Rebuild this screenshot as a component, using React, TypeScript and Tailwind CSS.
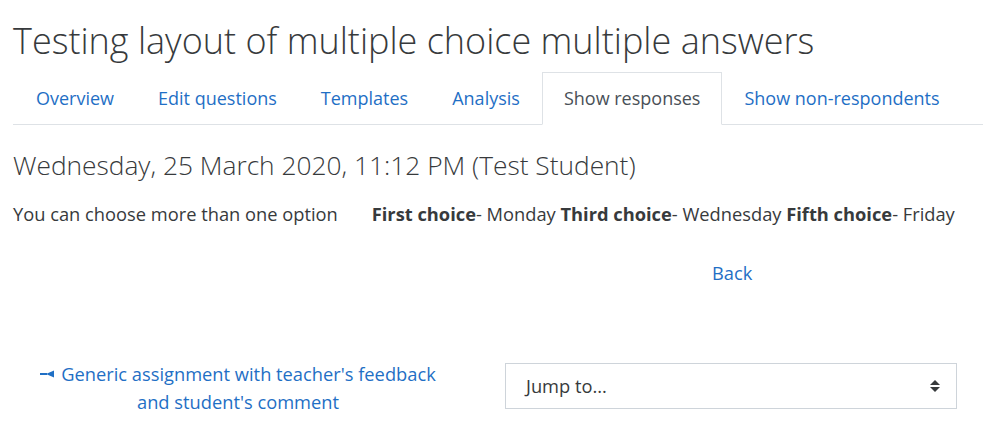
const tabs = [
  "Overview",
  "Edit questions",
  "Templates",
  "Analysis",
  "Show responses",
  "Show non-respondents",
];

const App = () => {
  return (
    <div
      className="w-[983px] h-[446px] overflow-hidden bg-white text-[#373a3c] text-[18.3px]"
      style={{ fontFamily: '"Open Sans", sans-serif' }}
    >
      <div className="pl-[13px]">
        <h2 className="pt-[18px] text-[36px] font-light leading-[45px] whitespace-nowrap">
          Testing layout of multiple choice multiple answers
        </h2>
        <ul className="mt-[9px] flex border-b border-[#dee2e6] pl-px text-[18px]">
          {tabs.map((t) => {
            const active = t === "Show responses";
            return (
              <li key={t} className="-mb-px">
                <a
                  href="#"
                  className={
                    active
                      ? "block px-[21px] py-[12px] leading-[27px] border border-[#dee2e6] border-b-white bg-white text-[#495057]"
                      : "block px-[21px] py-[12px] leading-[27px] border border-transparent text-[#1f6fc5]"
                  }
                >
                  {t}
                </a>
              </li>
            );
          })}
        </ul>
        <h3 className="mt-[22px] text-[26.3px] font-light leading-[36px] whitespace-nowrap">
          Wednesday, 25 March 2020, 11:12 PM (Test Student)
        </h3>
        <div className="mt-[17px] flex whitespace-nowrap leading-[28px]">
          <span>You can choose more than one option</span>
          <span className="ml-[34px]">
            <b className="font-bold">First choice</b>- Monday{" "}
            <b className="font-bold">Third choice</b>- Wednesday{" "}
            <b className="font-bold">Fifth choice</b>- Friday
          </span>
        </div>
        <div className="mt-[31px] pl-[699px] leading-[28px]">
          <a href="#" className="text-[#1f6fc5]">
            Back
          </a>
        </div>
        <div className="mt-[73px] flex items-start">
          <div className="w-[450px] text-center leading-[28px]">
            <a href="#" className="text-[#1f6fc5]">
              <svg
                width="15"
                height="8"
                viewBox="0 0 15 8"
                className="inline-block mr-[6px] align-[3px]"
              >
                <rect x="0" y="3" width="7" height="2" fill="#1f6fc5" />
                <polygon points="6,4 14,0.5 14,7.5" fill="#1f6fc5" />
              </svg>
              Generic assignment with teacher's feedback
              <br />
              and student's comment
            </a>
          </div>
          <div className="ml-[42px] mt-[3px] w-[452px] h-[46px] border border-[#ced4da] flex items-center justify-between pl-[20px] pr-[16px]">
            <span>Jump to...</span>
            <svg width="10" height="14" viewBox="0 0 10 14">
              <polygon points="5,1 10,6 0,6" fill="#373a3c" />
              <polygon points="0,8 10,8 5,13" fill="#373a3c" />
            </svg>
          </div>
        </div>
      </div>
    </div>
  );
};

export default App;
